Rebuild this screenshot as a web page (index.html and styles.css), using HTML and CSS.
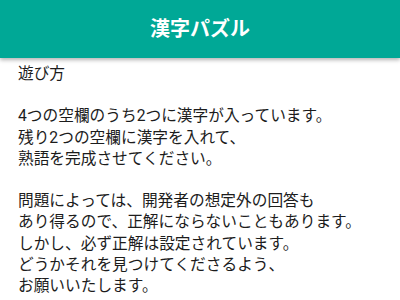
FILE: index.html
```html
<!DOCTYPE html>
<html lang="ja">
<head>
<meta charset="utf-8">
<link rel="stylesheet" href="styles.css">
</head>
<body>
<header class="appbar"><h1 class="title">漢字パズル</h1></header>
<main class="content">
<p class="para">遊び方</p>
<p class="para">4つの空欄のうち2つに漢字が入っています。<br>残り2つの空欄に漢字を入れて、<br>熟語を完成させてください。</p>
<p class="para">問題によっては、開発者の想定外の回答も<br>あり得るので、正解にならないこともあります。<br>しかし、必ず正解は設定されています。<br>どうかそれを見つけてくださるよう、<br>お願いいたします。</p>
</main>
</body>
</html>
```
FILE: styles.css
```css
html, body {
  margin: 0;
  padding: 0;
  background: #ffffff;
  font-family: Roboto, "Noto Sans CJK JP", sans-serif;
}
.appbar {
  height: 58px;
  background: #00a896;
  display: flex;
  align-items: center;
  justify-content: center;
  box-shadow: 0 2px 4px rgba(0,0,0,0.3);
  position: relative;
}
.title {
  margin: 0;
  color: #ffffff;
  font-size: 20px;
  font-weight: 700;
  line-height: 1;
}
.content {
  padding: 5px 18px 0;
}
.para {
  margin: 0 0 21.2px;
  font-size: 15.7px;
  line-height: 21.2px;
  color: #1c1c1c;
  white-space: nowrap;
}
```
